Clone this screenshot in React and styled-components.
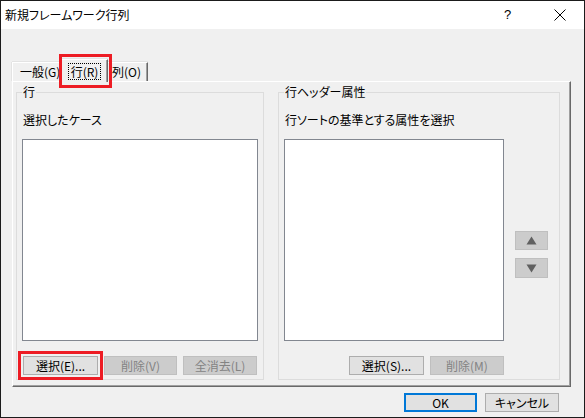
import React from "react";
import styled, { createGlobalStyle, css } from "styled-components";

const Global = createGlobalStyle`
  html, body { margin: 0; padding: 0; background: #ffffff; }
  body {
    font-family: "Noto Sans CJK JP", "Noto Sans", sans-serif;
    font-size: 12px;
    font-feature-settings: "palt";
    color: #000;
  }
  * { box-sizing: border-box; }
`;

const Window = styled.div`
  width: 585px;
  height: 418px;
  border: 1px solid #1b1b1b;
  display: flex;
  flex-direction: column;
  background: #f0f0f0;
`;

const TitleBar = styled.div`
  height: 28px;
  flex: none;
  background: #ffffff;
  display: flex;
  align-items: center;
  padding-left: 4px;
`;

const TitleText = styled.div`
  flex: 1;
  font-size: 12px;
  line-height: 14px;
`;

const Help = styled.div`
  width: 14px;
  font-size: 13px;
  line-height: 14px;
  margin-right: 36px;
  font-family: "Liberation Sans", sans-serif;
  font-weight: 300;
`;

const Close = styled.div`
  width: 12px;
  height: 12px;
  margin-right: 18px;
  display: flex;
`;

const Body = styled.div`
  flex: 1;
  display: flex;
  flex-direction: column;
  padding: 30px 13px 0 11px;
`;

const TabControl = styled.div`
  width: 559px;
  display: flex;
  flex-direction: column;
`;

const TabStrip = styled.div`
  height: 22px;
  display: flex;
  align-items: flex-end;
  position: relative;
  z-index: 2;
`;

const Tab = styled.div`
  position: relative;
  width: ${(p) => p.$w}px;
  height: 19px;
  display: flex;
  align-items: center;
  justify-content: ${(p) => (p.$center ? "center" : "flex-start")};
  padding-left: ${(p) => p.$pl || 0}px;
  background: #f0f0f0;
  border-top: 1px solid #ffffff;
  border-left: 1px solid #ffffff;
  border-right: 1px solid #696969;
  box-shadow: inset -1px 0 0 #a0a0a0, -1px 0 0 #e3e3e3, 0 -1px 0 #e3e3e3;
  line-height: 14px;
  ${(p) =>
    p.$selected &&
    css`
      height: 23px;
      margin: 0 -2px -1px -2px;
      width: ${p.$w + 4}px;
      z-index: 3;
    `}
`;

const FocusRect = styled.span`
  border: 1px dotted #000;
  padding: 1px 2px 0 2px;
  line-height: 14px;
`;

const RedBox = styled.span`
  position: absolute;
  top: -6px;
  left: -3px;
  right: -5px;
  bottom: -6px;
  border: 3px solid #ed1c24;
  pointer-events: none;
`;

const Panel = styled.div`
  height: 306px;
  border-top: 1px solid #ffffff;
  border-left: 1px solid #ffffff;
  border-right: 1px solid #696969;
  border-bottom: 1px solid #696969;
  box-shadow: inset -1px -1px 0 #a0a0a0;
  display: flex;
  gap: 14px;
  padding: 3px 9px 0 3px;
  position: relative;
  z-index: 1;
`;

const Group = styled.fieldset`
  margin: 0;
  padding: 0;
  width: ${(p) => p.$w}px;
  height: 295px;
  border: 1px solid #dcdcdc;
  min-width: 0;
`;

const Legend = styled.legend`
  margin-left: 5px;
  padding: 0 1px;
  font-size: 12px;
  line-height: 14px;
`;

const GroupInner = styled.div`
  display: flex;
  flex-direction: column;
  padding: 0 5px 0 5px;
`;

const Caption = styled.div`
  margin-top: 14px;
  margin-left: 1px;
  line-height: 14px;
  height: 14px;
`;

const ListBox = styled.div`
  margin-top: 12px;
  width: ${(p) => p.$w}px;
  height: 202px;
  background: #ffffff;
  border: 1px solid #828790;
`;

const ButtonRow = styled.div`
  display: flex;
  gap: 6px;
  margin-top: 15px;
  padding-left: ${(p) => p.$pl || 0}px;
  justify-content: ${(p) => (p.$end ? "flex-end" : "flex-start")};
`;

const Button = styled.div`
  width: ${(p) => p.$w}px;
  height: 19px;
  display: flex;
  align-items: center;
  justify-content: center;
  line-height: 14px;
  background: #e1e1e1;
  border: 1px solid #adadad;
  color: #000;
  ${(p) =>
    p.$disabled &&
    css`
      background: #cccccc;
      border-color: #bfbfbf;
      color: #838383;
    `}
  ${(p) =>
    p.$default &&
    css`
      border: 2px solid #0078d7;
    `}
  ${(p) =>
    p.$marked &&
    css`
      outline: 3px solid #ed1c24;
      outline-offset: 2px;
    `}
`;

const SortRow = styled.div`
  display: flex;
`;

const ListColumn = styled.div`
  display: flex;
  flex-direction: column;
`;

const ArrowColumn = styled.div`
  display: flex;
  flex-direction: column;
  gap: 8px;
  margin-left: 11px;
  margin-top: 104px;
`;

const ArrowButton = styled.div`
  width: 33px;
  height: ${(p) => p.$h}px;
  background: #cccccc;
  border: 1px solid #bfbfbf;
  display: flex;
  align-items: center;
  justify-content: center;
`;

const Footer = styled.div`
  display: flex;
  justify-content: flex-end;
  gap: 8px;
  margin-top: 6px;
  margin-right: 12px;
`;

const Triangle = ({ up }) => (
  <svg width="11" height="9" viewBox="0 0 11 9">
    <polygon
      points={up ? "5.5,0.5 10.5,8.5 0.5,8.5" : "0.5,0.5 10.5,0.5 5.5,8.5"}
      fill="#606060"
    />
  </svg>
);

export default function App() {
  return (
    <>
      <Global />
      <Window>
        <TitleBar>
          <TitleText>新規フレームワーク行列</TitleText>
          <Help>?</Help>
          <Close>
            <svg width="12" height="12" viewBox="0 0 12 12">
              <path d="M0.5 0.5 L11.5 11.5 M11.5 0.5 L0.5 11.5" stroke="#000" strokeWidth="1" fill="none" />
            </svg>
          </Close>
        </TitleBar>
        <Body>
          <TabControl>
            <TabStrip>
              <Tab $w={51} $pl={7}>一般(G)</Tab>
              <Tab $w={43} $center $selected>
                <FocusRect>行(R)</FocusRect>
                <RedBox />
              </Tab>
              <Tab $w={42} $pl={5}>列(O)</Tab>
            </TabStrip>
            <Panel>
              <Group $w={248}>
                <Legend>行</Legend>
                <GroupInner>
                  <Caption>選択したケース</Caption>
                  <ListBox $w={236} />
                  <ButtonRow $pl={1}>
                    <Button $w={75} $marked>選択(E)...</Button>
                    <Button $w={73} $disabled>削除(V)</Button>
                    <Button $w={74} $disabled>全消去(L)</Button>
                  </ButtonRow>
                </GroupInner>
              </Group>
              <Group $w={282}>
                <Legend>行ヘッダー属性</Legend>
                <GroupInner>
                  <Caption>行ソートの基準とする属性を選択</Caption>
                  <SortRow>
                    <ListColumn>
                      <ListBox $w={220} />
                      <ButtonRow $end>
                        <Button $w={75}>選択(S)...</Button>
                        <Button $w={74} $disabled>削除(M)</Button>
                      </ButtonRow>
                    </ListColumn>
                    <ArrowColumn>
                      <ArrowButton $h={19}>
                        <Triangle up />
                      </ArrowButton>
                      <ArrowButton $h={20}>
                        <Triangle />
                      </ArrowButton>
                    </ArrowColumn>
                  </SortRow>
                </GroupInner>
              </Group>
            </Panel>
          </TabControl>
          <Footer>
            <Button $w={73} $default>OK</Button>
            <Button $w={74}>キャンセル</Button>
          </Footer>
        </Body>
      </Window>
    </>
  );
}
